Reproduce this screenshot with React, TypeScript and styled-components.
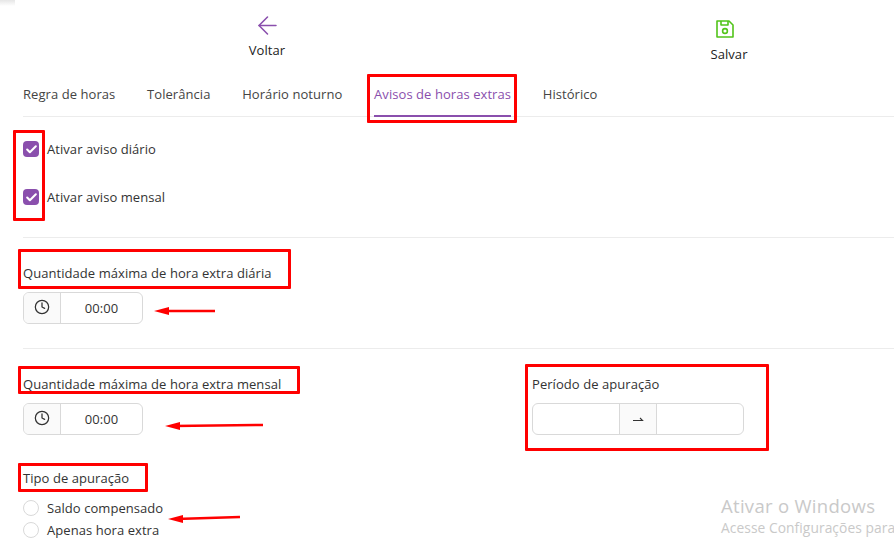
import React from "react";
import styled, { createGlobalStyle } from "styled-components";
import { ArrowLeft, Clock, Check } from "lucide-react";

const Global = createGlobalStyle`
  html, body { margin: 0; padding: 0; background: #fff; }
  body { font-family: "Open Sans", "Noto Sans", sans-serif; font-size: 13px; color: #333; letter-spacing: 0.06px; }
`;

const Page = styled.div`
  position: relative;
  width: 894px;
  height: 548px;
  overflow: hidden;
  background: #fff;
`;

const CornerShade = styled.div`
  position: absolute;
  left: 0;
  top: 0;
  width: 15px;
  height: 6px;
  background: linear-gradient(#e6e6e6, #ffffff);
`;

const Toolbar = styled.div`
  display: grid;
  grid-template-columns: 534px 390px;
  height: 74px;
`;

const Action = styled.div<{ $top: number; $gap: number }>`
  display: flex;
  flex-direction: column;
  align-items: center;
  gap: ${(p) => p.$gap}px;
  padding-top: ${(p) => p.$top}px;
  line-height: 18px;
  color: #222;
`;

const SaveGlyph = styled.svg`
  display: block;
  margin-right: 8px;
`;

const Tabs = styled.div`
  display: flex;
  gap: 31.75px;
  margin-left: 23px;
  height: 42px;
  border-bottom: 1px solid #ececec;
`;

const Tab = styled.div<{ $active?: boolean }>`
  height: 43px;
  padding-top: 11px;
  box-sizing: border-box;
  line-height: 18px;
  color: ${(p) => (p.$active ? "#8a4fad" : "#444")};
  font-weight: ${(p) => (p.$active ? 500 : 400)};
  border-bottom: ${(p) => (p.$active ? "2px solid #8a4fad" : "none")};
`;

const Checks = styled.div`
  display: flex;
  flex-direction: column;
  gap: 32px;
  margin-left: 23px;
  padding: 24px 0 32px;
  border-bottom: 1px solid #ececec;
`;

const Option = styled.div`
  display: flex;
  align-items: center;
  gap: 8px;
  height: 16px;
  line-height: 16px;
`;

const CheckBox = styled.span`
  display: flex;
  align-items: center;
  justify-content: center;
  width: 16px;
  height: 16px;
  border-radius: 4px;
  background: #8a4fad;
  color: #fff;
`;

const Section = styled.div`
  margin-left: 23px;
  height: 111px;
  box-sizing: border-box;
  padding-top: 26px;
  border-bottom: 1px solid #ececec;
`;

const Split = styled.div`
  display: grid;
  grid-template-columns: 509px 1fr;
  margin-left: 23px;
  padding-top: 26px;
`;

const Label = styled.div`
  height: 18px;
  line-height: 18px;
  margin-bottom: 10px;
  color: #333;
`;

const TimeField = styled.div`
  display: flex;
  width: 120px;
  height: 32px;
  box-sizing: border-box;
  border: 1px solid #d9d9d9;
  border-radius: 6px;
  overflow: hidden;
`;

const Addon = styled.div<{ $w: number }>`
  display: flex;
  align-items: center;
  justify-content: center;
  box-sizing: border-box;
  width: ${(p) => p.$w}px;
  background: #fafafa;
  color: #333;
`;

const ClockGlyph = styled(Clock)`
  margin-bottom: 2px;
`;

const TimeValue = styled.div`
  flex: 1;
  display: flex;
  align-items: center;
  justify-content: center;
  border-left: 1px solid #d9d9d9;
  color: #333;
`;

const RangeField = styled.div`
  display: flex;
  width: 212px;
  height: 32px;
  box-sizing: border-box;
  border: 1px solid #d9d9d9;
  border-radius: 6px;
  overflow: hidden;
`;

const RangeInput = styled.div`
  flex: 1;
`;

const RangeSep = styled(Addon)`
  border-left: 1px solid #d9d9d9;
  border-right: 1px solid #d9d9d9;
`;

const TypeGroup = styled.div`
  margin: 34px 0 0 23px;
`;

const Radios = styled.div`
  display: flex;
  flex-direction: column;
  gap: 6px;
  margin-top: 13px;
`;

const RadioCircle = styled.span`
  width: 16px;
  height: 16px;
  box-sizing: border-box;
  border: 1px solid #d9d9d9;
  border-radius: 50%;
`;

const Mark = styled.div<{ $x: number; $y: number; $w: number; $h: number }>`
  position: absolute;
  left: ${(p) => p.$x}px;
  top: ${(p) => p.$y}px;
  width: ${(p) => p.$w}px;
  height: ${(p) => p.$h}px;
  box-sizing: border-box;
  border: 3px solid #ff0000;
  border-radius: 1px;
`;

const Overlay = styled.svg`
  position: absolute;
  inset: 0;
  pointer-events: none;
`;

const Watermark = styled.div`
  position: absolute;
  left: 721px;
  top: 494px;
  white-space: nowrap;
  color: #c9c9c9;
`;

const WatermarkTitle = styled.div`
  font-size: 18.5px;
  line-height: 24px;
  letter-spacing: 0.3px;
`;

const WatermarkSub = styled.div`
  font-size: 13.8px;
  line-height: 20px;
`;

const SaveIcon = () => (
  <SaveGlyph width="18" height="18" viewBox="0 0 18 18" fill="none" stroke="#52c41a" strokeWidth="1.6" strokeLinejoin="round">
    <path d="M1 1h12l4 4v12H1z" />
    <path d="M5 1v4h7V1" />
    <circle cx="9" cy="11" r="2.4" />
  </SaveGlyph>
);

const SepIcon = () => (
  <svg width="12" height="8" viewBox="0 0 12 8" fill="none" stroke="#333" strokeWidth="1.1">
    <path d="M1 5.5h9.5L8 3" />
  </svg>
);

const Arrow = ({ x1, y1, x2, y2 }: { x1: number; y1: number; x2: number; y2: number }) => (
  <>
    <line x1={x1 + 8} y1={y1} x2={x2} y2={y2} stroke="#ff0000" strokeWidth="2.5" />
    <polygon points={`${x1},${y1} ${x1 + 15},${y1 - 4} ${x1 + 15},${y1 + 4}`} fill="#ff0000" />
  </>
);

export default function App() {
  return (
    <Page>
      <Global />
      <CornerShade />
      <Toolbar>
        <Action $top={11} $gap={1}>
          <ArrowLeft size={29} color="#8a4fad" strokeWidth={1.3} />
          <span>Voltar</span>
        </Action>
        <Action $top={20} $gap={7}>
          <SaveIcon />
          <span>Salvar</span>
        </Action>
      </Toolbar>
      <Tabs>
        <Tab>Regra de horas</Tab>
        <Tab>Tolerância</Tab>
        <Tab>Horário noturno</Tab>
        <Tab $active>Avisos de horas extras</Tab>
        <Tab>Histórico</Tab>
      </Tabs>
      <Checks>
        <Option>
          <CheckBox><Check size={13} strokeWidth={3.8} /></CheckBox>
          <span>Ativar aviso diário</span>
        </Option>
        <Option>
          <CheckBox><Check size={13} strokeWidth={3.8} /></CheckBox>
          <span>Ativar aviso mensal</span>
        </Option>
      </Checks>
      <Section>
        <Label>Quantidade máxima de hora extra diária</Label>
        <TimeField>
          <Addon $w={36}><ClockGlyph size={16} strokeWidth={1.9} /></Addon>
          <TimeValue>00:00</TimeValue>
        </TimeField>
      </Section>
      <Split>
        <div>
          <Label>Quantidade máxima de hora extra mensal</Label>
          <TimeField>
            <Addon $w={36}><ClockGlyph size={16} strokeWidth={1.9} /></Addon>
            <TimeValue>00:00</TimeValue>
          </TimeField>
        </div>
        <div>
          <Label>Período de apuração</Label>
          <RangeField>
            <RangeInput />
            <RangeSep $w={38}><SepIcon /></RangeSep>
            <RangeInput />
          </RangeField>
        </div>
      </Split>
      <TypeGroup>
        <Label>Tipo de apuração</Label>
        <Radios>
          <Option><RadioCircle /><span>Saldo compensado</span></Option>
          <Option><RadioCircle /><span>Apenas hora extra</span></Option>
        </Radios>
      </TypeGroup>

      <Mark $x={367} $y={74} $w={150} $h={49} />
      <Mark $x={13} $y={130} $w={32} $h={91} />
      <Mark $x={18} $y={249} $w={273} $h={40} />
      <Mark $x={18} $y={366} $w={282} $h={28} />
      <Mark $x={525} $y={364} $w={244} $h={87} />
      <Mark $x={18} $y={463} $w={130} $h={29} />
      <Overlay width="894" height="548">
        <Arrow x1={154} y1={311} x2={215} y2={311} />
        <Arrow x1={165} y1={426} x2={263} y2={425} />
        <Arrow x1={168} y1={519} x2={240} y2={517} />
      </Overlay>
      <Watermark>
        <WatermarkTitle>Ativar o Windows</WatermarkTitle>
        <WatermarkSub>Acesse Configurações para</WatermarkSub>
      </Watermark>
    </Page>
  );
}
